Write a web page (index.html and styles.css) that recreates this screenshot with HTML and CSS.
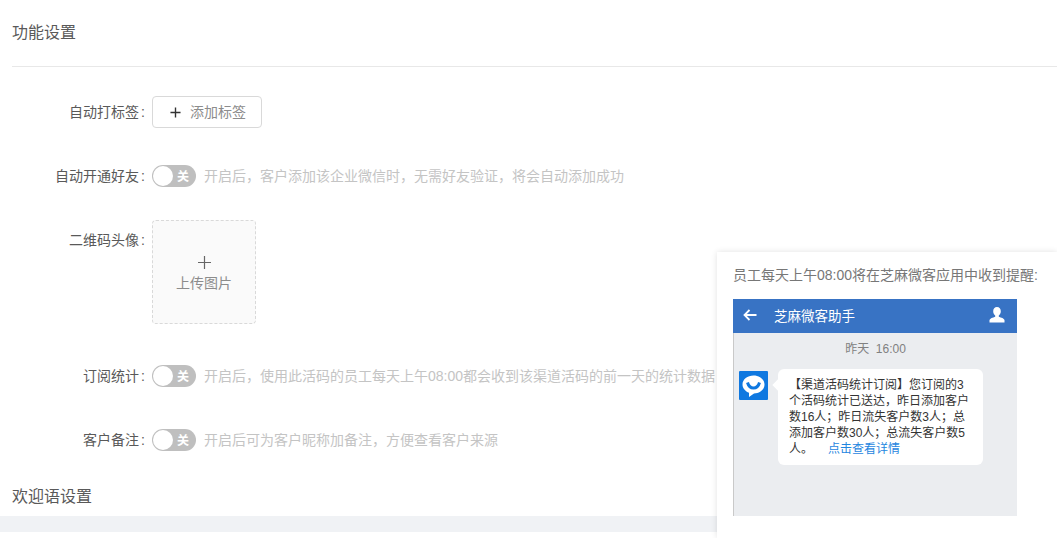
FILE: index.html
```html
<!DOCTYPE html>
<html lang="zh-CN">
<head>
<meta charset="utf-8">
<title>功能设置</title>
<link rel="stylesheet" href="styles.css">
</head>
<body>
<main class="page">
  <h2 class="section-title title-first">功能设置</h2>
  <form class="form">
    <div class="row">
      <span class="label">自动打标签<i class="colon">:</i></span>
      <button type="button" class="add-btn"><svg class="add-icon" viewBox="0 0 12 12"><path d="M6 .5v11M.5 6h11"/></svg><span>添加标签</span></button>
    </div>
    <div class="row">
      <span class="label">自动开通好友<i class="colon">:</i></span>
      <span class="switch"><i class="knob"></i><b class="switch-text">关</b></span>
      <span class="hint">开启后，客户添加该企业微信时，无需好友验证，将会自动添加成功</span>
    </div>
    <div class="row row-upload">
      <span class="label">二维码头像<i class="colon">:</i></span>
      <div class="upload">
        <svg class="upload-icon" viewBox="0 0 13 13"><path d="M6.500 0v13M0 6.500h13"/></svg>
        <span>上传图片</span>
      </div>
    </div>
    <div class="row">
      <span class="label">订阅统计<i class="colon">:</i></span>
      <span class="switch"><i class="knob"></i><b class="switch-text">关</b></span>
      <span class="hint">开启后，使用此活码的员工每天上午08:00都会收到该渠道活码的前一天的统计数据</span>
    </div>
    <div class="row">
      <span class="label">客户备注<i class="colon">:</i></span>
      <span class="switch"><i class="knob"></i><b class="switch-text">关</b></span>
      <span class="hint">开启后可为客户昵称加备注，方便查看客户来源</span>
    </div>
  </form>
  <h2 class="section-title title-second">欢迎语设置</h2>
  <div class="band"></div>
</main>
<aside class="popup">
  <p class="popup-title">员工每天上午08:00将在芝麻微客应用中收到提醒:</p>
  <div class="phone">
    <header class="phone-bar">
      <svg class="back" viewBox="0 0 14 12"><path d="M13.500 6H1.500M6.500 1L1.500 6l5 5"/></svg>
      <span class="phone-name">芝麻微客助手</span>
      <svg class="person" viewBox="0 0 16 16"><path d="M8 0c2.400 0 3.800 1.800 3.800 4.200 0 2-.9 3.500-2 4.300v1.300c2.500.8 5.200 1.700 5.700 3.200v2.500H.5V13c.5-1.500 3.200-2.400 5.700-3.200V8.500c-1.100-.8-2-2.300-2-4.300C4.200 1.800 5.600 0 8 0z"/></svg>
    </header>
    <div class="chat">
      <div class="time">昨天&nbsp;&nbsp;16:00</div>
      <div class="message">
        <svg class="avatar" viewBox="0 0 29 29"><rect width="29" height="29" rx="1" fill="#0f78e0"/><path d="M14.500 4.500c6 0 11 3.800 11 9 0 5.200-4.800 9-10.500 9l-5 3.500v-4.200C6.500 20.300 3.500 17.300 3.500 13.500c0-5.200 5-9 11-9z" fill="#fff"/><path d="M8.500 11.500c1 3.500 3.300 5.500 6 5.500s5-2 6-5.500" fill="none" stroke="#0f78e0" stroke-width="3"/></svg>
        <div class="bubble">【渠道活码统计订阅】您订阅的3个活码统计已送达，昨日添加客户数16人；昨日流失客户数3人；总添加客户数30人；总流失客户数5人。<a class="detail">点击查看详情</a></div>
      </div>
    </div>
  </div>
</aside>
</body>
</html>
```
FILE: styles.css
```css
* { box-sizing: border-box; }
html, body { margin: 0; height: 538px; overflow: hidden; background: #fff; }
body {
  position: relative;
  font-family: "Liberation Sans", "Noto Sans CJK SC", sans-serif;
  font-size: 14px;
  color: #595959;
}
.page { padding-left: 12px; }
.section-title { margin: 0; font-weight: 400; font-size: 16px; line-height: 22px; color: #595959; }
.title-first { padding: 22px 0 22px; border-bottom: 1px solid #e8e8e8; }
.title-second { margin-top: 30px; }
.form { display: flex; flex-direction: column; gap: 32px; padding-top: 29px; }
.row { display: flex; align-items: center; height: 32px; }
.label { width: 133px; margin-right: 7px; text-align: right; line-height: 32px; white-space: nowrap; }
.colon { margin-left: 2px; font-style: normal; }
.add-btn {
  display: flex; align-items: center; width: 110px; height: 32px; padding: 0 0 2px 17px;
  border: 1px solid #d9d9d9; border-radius: 4px; background: #fff;
  font: inherit; color: #8c8c8c;
}
.add-icon { width: 11px; height: 11px; margin: 2px 9px 0 0; fill: none; stroke: #333; stroke-width: 1.500; }
.switch {
  position: relative; flex: none; width: 44px; height: 22px; border-radius: 11px; background: #bfbfbf;
}
.knob {
  position: absolute; left: 1px; top: 1px; width: 20px; height: 20px; border-radius: 50%; background: #fff;
}
.switch-text {
  position: absolute; right: 7px; top: 1px; font-weight: 700; font-size: 12px; line-height: 22px; color: #fff;
}
.hint { margin: 0 0 2px 8px; color: #c4c4c4; font-size: 14px; white-space: nowrap; }
.row-upload { align-items: flex-start; height: 100px; margin-bottom: 4px; }
.upload {
  display: flex; flex-direction: column; align-items: center; justify-content: center;
  flex: none; width: 104px; height: 104px; margin-top: -4px; padding-top: 4px;
  background: #fafafa; border: 1px dashed #d9d9d9; border-radius: 4px; color: #8c8c8c; font-size: 14px;
}
.upload-icon { width: 13px; height: 13px; margin-bottom: 3px; fill: none; stroke: #666; stroke-width: 1.200; }
.band { height: 16px; margin: 8px 0 0 -12px; background: #f0f2f5; }
.popup {
  position: absolute; left: 717px; top: 252px; width: 340px; height: 286px;
  padding: 14px 16px 0; background: #fff; box-shadow: 0 0 6px rgba(0, 0, 0, .12);
}
.popup-title { margin: 0 0 14px; font-size: 14px; line-height: 19px; color: #777; white-space: nowrap; }
.phone { width: 284px; height: 217px; display: flex; flex-direction: column; border-left: 1px solid #c9c9c9; }
.phone-bar {
  display: flex; align-items: center; flex: none; height: 34px; margin-left: -1px; padding: 0 12px 2px 10px;
  background: #3873c4; color: #fff; font-size: 13.500px;
}
.back { width: 14px; height: 12px; margin-right: 17px; fill: none; stroke: #fff; stroke-width: 1.800; }
.phone-name { flex: 1; }
.person { width: 16px; height: 16px; fill: #fff; }
.chat { flex: 1; background: #ebedf0; }
.time { margin-top: 8px; text-align: center; font-size: 12px; line-height: 16px; color: #808080; }
.message { display: flex; margin: 12px 0 0 5px; }
.avatar { flex: none; width: 29px; height: 29px; margin: 2px 10px 0 0; }
.bubble {
  position: relative; flex: none; width: 205px; height: 96px; padding: 8px 11px;
  background: #fff; border-radius: 6px; font-size: 12px; line-height: 16px; color: #333;
}
.bubble::before {
  content: ""; position: absolute; left: -4px; top: 12px; width: 8px; height: 8px; background: #fff; transform: rotate(45deg);
}
.detail { margin-left: 15px; color: #1f86e0; font-size: 12px; }
```
